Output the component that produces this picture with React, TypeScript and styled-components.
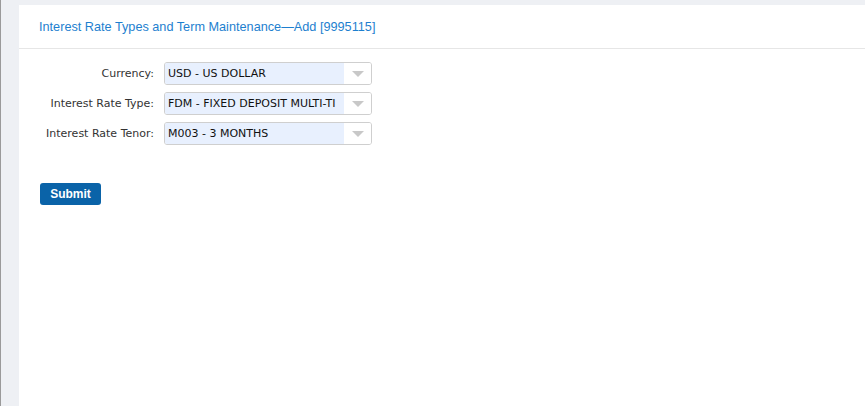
import React from "react";
import styled, { createGlobalStyle } from "styled-components";

const Global = createGlobalStyle`
  html, body { margin: 0; padding: 0; height: 100%; }
  body { background: #eef0f4; font-family: "Liberation Sans", Arial, sans-serif; }
  #root { height: 100%; }
`;

const Shell = styled.div`
  display: flex;
  height: 406px;
  border-left: 1px solid #9a9a9a;
  box-sizing: border-box;
  padding: 5px 0 0 18px;
  background: #eef0f4;
`;

const Panel = styled.div`
  flex: 1;
  background: #ffffff;
  display: flex;
  flex-direction: column;
`;

const Header = styled.div`
  height: 44px;
  border-bottom: 1px solid #e6e6e6;
  display: flex;
  align-items: center;
  padding-left: 20px;
  box-sizing: border-box;
`;

const Title = styled.h1`
  margin: 0;
  font-family: "Liberation Sans", Arial, sans-serif;
  font-weight: normal;
  font-size: 12.7px;
  color: #1e7fcf;
`;

const Form = styled.div`
  display: flex;
  flex-direction: column;
  gap: 7px;
  padding: 13px 0 0 21px;
`;

const Row = styled.div`
  display: flex;
  align-items: center;
  gap: 10px;
`;

const Label = styled.label`
  width: 114px;
  text-align: right;
  font-family: "DejaVu Sans", Tahoma, sans-serif;
  font-size: 11px;
  color: #333;
  white-space: nowrap;
`;

const Select = styled.div`
  width: 208px;
  height: 23px;
  box-sizing: border-box;
  border: 1px solid #cfcfcf;
  border-radius: 3px;
  display: flex;
  overflow: hidden;
`;

const Value = styled.div`
  flex: 1;
  min-width: 0;
  background: #e8f0fe;
  display: flex;
  align-items: center;
  padding-left: 3px;
  font-family: "DejaVu Sans", Tahoma, sans-serif;
  font-size: 11px;
  color: #111;
  white-space: nowrap;
`;

const Arrow = styled.div`
  width: 27px;
  flex: none;
  display: flex;
  align-items: center;
  justify-content: center;
  background: #fff;
  &::after {
    content: "";
    border-left: 6px solid transparent;
    border-right: 6px solid transparent;
    border-top: 6px solid #c8c8c8;
  }
`;

const Actions = styled.div`
  padding: 38px 0 0 21px;
`;

const Button = styled.button`
  width: 61px;
  height: 22px;
  border: none;
  border-radius: 3px;
  background: #0a63a8;
  color: #fff;
  font-family: "Liberation Sans", Arial, sans-serif;
  font-weight: bold;
  font-size: 12px;
  cursor: pointer;
  padding: 0;
`;

const fields = [
  { label: "Currency:", value: "USD - US DOLLAR" },
  { label: "Interest Rate Type:", value: "FDM - FIXED DEPOSIT MULTI-TI" },
  { label: "Interest Rate Tenor:", value: "M003 - 3 MONTHS" },
];

export default function App() {
  return (
    <>
      <Global />
      <Shell>
        <Panel>
          <Header>
            <Title>Interest Rate Types and Term Maintenance—Add [9995115]</Title>
          </Header>
          <Form>
            {fields.map((f) => (
              <Row key={f.label}>
                <Label>{f.label}</Label>
                <Select>
                  <Value>{f.value}</Value>
                  <Arrow />
                </Select>
              </Row>
            ))}
          </Form>
          <Actions>
            <Button>Submit</Button>
          </Actions>
        </Panel>
      </Shell>
    </>
  );
}
